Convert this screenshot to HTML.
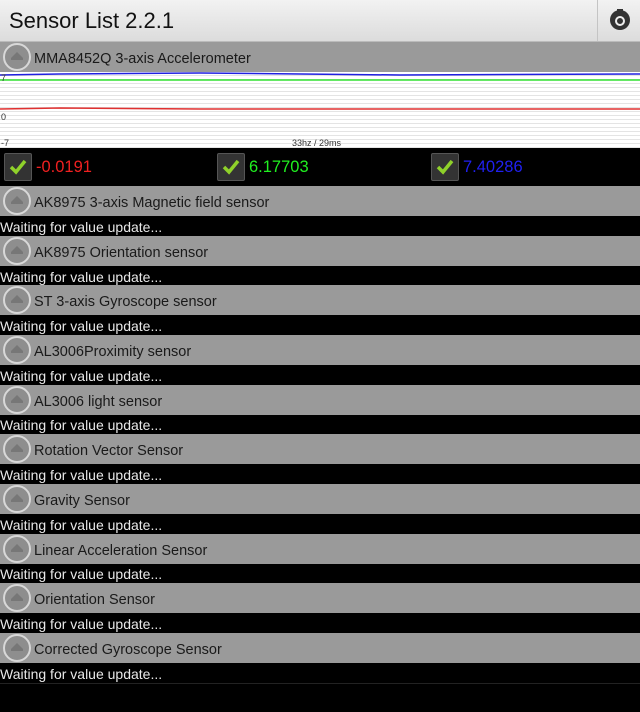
<!DOCTYPE html>
<html><head><style>
body{margin:0;width:640px;height:712px;background:#000;position:relative;overflow:hidden;font-family:"Liberation Sans",sans-serif}
.hdr{position:absolute;left:0;top:0;width:640px;height:42px;background:linear-gradient(#f2f2f2,#dcdcdc);border-bottom:1px solid #bbb;box-sizing:border-box}
.hdr .t{position:absolute;left:9px;top:8px;font-size:22px;color:#111}
.hdr .d{position:absolute;left:597px;top:0;width:1px;height:41px;background:#c4c4c4}
.g{position:absolute;left:0;width:640px;height:30px;background:#9a9a9a}
.g span{position:absolute;left:34px;top:9px;font-size:14.5px;color:#1a1a1a}
.ic{position:absolute;left:3px;top:1px;width:28px;height:28px;border-radius:50%;border:2px solid #d8d8d8;background:#8e8e8e;box-sizing:border-box}
.ic:after{content:"";position:absolute;left:6px;top:7px;border-left:6px solid transparent;border-right:6px solid transparent;border-bottom:6px solid #777}
.ic:before{content:"";position:absolute;left:6px;top:13px;width:12px;height:2px;background:#777}
.w{position:absolute;left:0;font-size:14px;color:#e8e8e8}
.chart{position:absolute;left:0;top:72px;width:640px;height:76px;background:repeating-linear-gradient(#fff 0 3px,#e4e4e4 3px 4px)}
.lb{position:absolute;font-size:9px;color:#333}
.cb{position:absolute;top:153px;width:28px;height:28px;background:#333;border:1px solid #555;box-sizing:border-box;border-radius:2px}
.v{position:absolute;top:158px;font-size:16.5px}
</style></head><body>
<div class="hdr"><div class="t">Sensor List 2.2.1</div><div class="d"></div>
<svg style="position:absolute;left:608px;top:8px" width="24" height="24" viewBox="0 0 24 24"><circle cx="12" cy="12" r="10" fill="#333"/><rect x="9" y="1" width="6" height="4" fill="#333"/><circle cx="12" cy="13" r="4" fill="none" stroke="#eee" stroke-width="2"/></svg></div>
<div class="g" style="top:42px"><div class="ic"></div><span>MMA8452Q 3-axis Accelerometer</span></div>
<div class="chart">
<svg width="640" height="76" style="position:absolute;left:0;top:0"><polyline points="0,3 60,2 200,1 400,3 640,2" fill="none" stroke="#2020e0" stroke-width="1.5"/><line x1="0" y1="8" x2="640" y2="8" stroke="#30e030" stroke-width="1.5"/><polyline points="0,37 60,36 200,37 640,37" fill="none" stroke="#e03030" stroke-width="1.5"/></svg>
<div class="lb" style="left:1px;top:1px">7</div><div class="lb" style="left:1px;top:40px">0</div><div class="lb" style="left:1px;top:66px">-7</div><div class="lb" style="left:292px;top:66px">33hz / 29ms</div></div>
<div class="cb" style="left:4px"><svg width="26" height="26"><path d="M6 13l5 5 9-11" fill="none" stroke="#8fd12a" stroke-width="3.5"/></svg></div><div class="v" style="left:36px;color:#f02020">-0.0191</div>
<div class="cb" style="left:217px"><svg width="26" height="26"><path d="M6 13l5 5 9-11" fill="none" stroke="#8fd12a" stroke-width="3.5"/></svg></div><div class="v" style="left:249px;color:#20f020">6.17703</div>
<div class="cb" style="left:431px"><svg width="26" height="26"><path d="M6 13l5 5 9-11" fill="none" stroke="#8fd12a" stroke-width="3.5"/></svg></div><div class="v" style="left:463px;color:#2020f0">7.40286</div>
<div class="g" style="top:186px"><div class="ic"></div><span>AK8975 3-axis Magnetic field sensor</span></div><div class="w" style="top:219px">Waiting for value update...</div>
<div class="g" style="top:236px"><div class="ic"></div><span>AK8975 Orientation sensor</span></div><div class="w" style="top:269px">Waiting for value update...</div>
<div class="g" style="top:285px"><div class="ic"></div><span>ST 3-axis Gyroscope sensor</span></div><div class="w" style="top:318px">Waiting for value update...</div>
<div class="g" style="top:335px"><div class="ic"></div><span>AL3006Proximity sensor</span></div><div class="w" style="top:368px">Waiting for value update...</div>
<div class="g" style="top:385px"><div class="ic"></div><span>AL3006 light sensor</span></div><div class="w" style="top:417px">Waiting for value update...</div>
<div class="g" style="top:434px"><div class="ic"></div><span>Rotation Vector Sensor</span></div><div class="w" style="top:467px">Waiting for value update...</div>
<div class="g" style="top:484px"><div class="ic"></div><span>Gravity Sensor</span></div><div class="w" style="top:517px">Waiting for value update...</div>
<div class="g" style="top:534px"><div class="ic"></div><span>Linear Acceleration Sensor</span></div><div class="w" style="top:566px">Waiting for value update...</div>
<div class="g" style="top:583px"><div class="ic"></div><span>Orientation Sensor</span></div><div class="w" style="top:616px">Waiting for value update...</div>
<div class="g" style="top:633px"><div class="ic"></div><span>Corrected Gyroscope Sensor</span></div><div class="w" style="top:666px">Waiting for value update...</div>
<div style="position:absolute;left:0;top:683px;width:640px;height:1px;background:#222"></div>
</body></html>
